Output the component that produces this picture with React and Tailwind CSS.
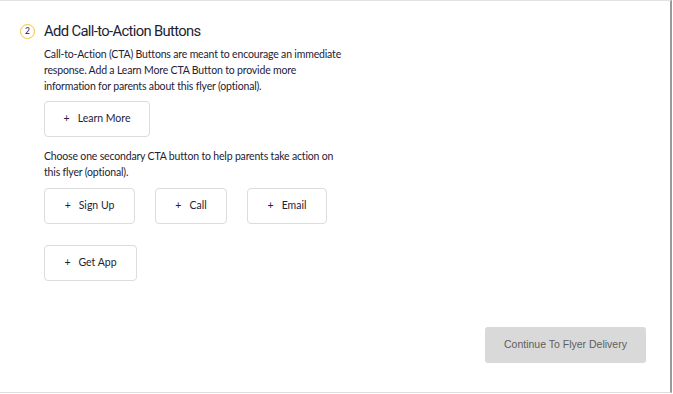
import React from "react";

function Btn({ label, w }) {
  return (
    <button className={`h-[36px] ${w} rounded-[4px] border border-[#dcdcdc] bg-white flex items-center justify-center text-[10.5px] text-[#1e2235]`}>
      <span className="mr-[8px]">+</span>
      <span>{label}</span>
    </button>
  );
}

export default function App() {
  return (
    <div
      className="w-[673px] h-[394px] bg-white relative overflow-hidden"
      style={{ fontFamily: "Lato, 'Open Sans', sans-serif" }}
    >
      <div className="w-[672px] h-[393px] border-t border-t-[#e2e2e2] border-b border-b-[#dedede] border-r-2 border-r-[#9a9a9a] flex flex-col">
        <div className="flex pl-[20px] pt-[20px]">
          <div className="w-[15px] h-[15px] mt-[3px] rounded-full border-[1.5px] border-[#f5c242] flex items-center justify-center text-[8.5px] text-[#1e2235] leading-none">
            2
          </div>
          <div className="ml-[9px] flex flex-col">
            <div
              className="text-[14.8px] leading-[20px] tracking-[-0.65px] text-[#1e2235]"
              style={{ fontFamily: "Roboto, Lato, sans-serif" }}
            >
              Add Call-to-Action Buttons
            </div>
            <p className="mt-[5px] whitespace-nowrap text-[10.5px] leading-[16px] tracking-[-0.17px] text-[#1e2235]">
              Call-to-Action (CTA) Buttons are meant to encourage an immediate
              <br />
              response. Add a Learn More CTA Button to provide more
              <br />
              information for parents about this flyer (optional).
            </p>
            <div className="mt-[7px]">
              <Btn label="Learn More" w="w-[106px]" />
            </div>
            <p className="mt-[11px] whitespace-nowrap text-[10.5px] leading-[16px] tracking-[-0.17px] text-[#1e2235]">
              Choose one secondary CTA button to help parents take action on
              <br />
              this flyer (optional).
            </p>
            <div className="mt-[8px] flex gap-[20px]">
              <Btn label="Sign Up" w="w-[91px]" />
              <Btn label="Call" w="w-[72px]" />
              <Btn label="Email" w="w-[80px]" />
            </div>
            <div className="mt-[21px] flex">
              <Btn label="Get App" w="w-[93px]" />
            </div>
          </div>
        </div>
        <div className="flex justify-end pr-[24px] mt-[46px]">
          <button
            className="w-[161px] h-[36px] rounded-[3px] bg-[#d9d9d9] text-[10.5px] text-[#5e5e5e]"
            style={{ fontFamily: "'Liberation Sans', Arial, sans-serif" }}
          >
            Continue To Flyer Delivery
          </button>
        </div>
      </div>
    </div>
  );
}
